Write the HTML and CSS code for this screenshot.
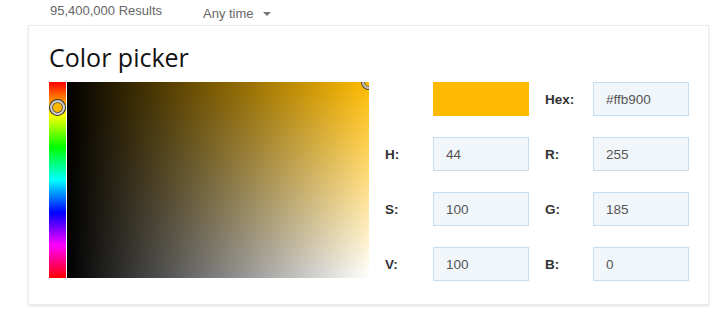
FILE: index.html
```html
<!DOCTYPE html>
<html lang="en">

<head>
    <meta charset="UTF-8">
    <title>Color picker</title>
    <link rel="stylesheet" href="styles.css">
</head>

<body>

    <header class="resultbar">
        <span class="count">95,400,000 Results</span>
        <span class="tidsfilter">Any time <span class="caret"></span></span>
    </header>

    <main>
        <section class="kort">
            <h2 class="overskrift">Color picker</h2>

            <div class="picker">
                <div class="vaelger">
                    <div class="hue">
                        <span class="hue-knap"></span>
                    </div>
                    <div class="felt">
                        <span class="felt-knap"></span>
                    </div>
                </div>

                <div class="vaerdier">
                    <span></span>
                    <div class="swatch"></div>
                    <label>Hex:</label>
                    <input type="text" value="#ffb900">

                    <label>H:</label>
                    <input type="text" value="44">
                    <label>R:</label>
                    <input type="text" value="255">

                    <label>S:</label>
                    <input type="text" value="100">
                    <label>G:</label>
                    <input type="text" value="185">

                    <label>V:</label>
                    <input type="text" value="100">
                    <label>B:</label>
                    <input type="text" value="0">
                </div>
            </div>
        </section>

        <article class="resultat">
            <a href="#">www.html color picker online tool</a>
        </article>
    </main>

</body>

</html>
```

FILE: styles.css
```css
body {
    margin: 0;
    background-color: white;
    font-family: "Liberation Sans", Arial, sans-serif;
    overflow: hidden;
}

.resultbar {
    display: flex;
    padding: 3px 0 0 50px;
    height: 22px;
    font-size: 13px;
    line-height: 16px;
    color: #666;
}

.count {
    width: 153px;
}

.tidsfilter {
    display: flex;
    align-items: center;
}

.caret {
    margin-left: 9px;
    border-left: 4px solid transparent;
    border-right: 4px solid transparent;
    border-top: 4px solid #777;
}

.kort {
    box-sizing: border-box;
    width: 681px;
    margin-left: 28px;
    padding: 14px 20px 23px 20px;
    border: 1px solid #ebebeb;
    box-shadow: 0 1px 2px rgba(0, 0, 0, .12);
}

.overskrift {
    margin: 0 0 8px 0;
    font-family: "Open Sans", sans-serif;
    font-weight: normal;
    font-size: 25px;
    line-height: 34px;
    color: #111;
}

.picker {
    display: flex;
    gap: 16px;
}

.vaelger {
    display: flex;
    gap: 1px;
    height: 196px;
}

.hue {
    position: relative;
    width: 17px;
    background: linear-gradient(to bottom, #f00, #ff0 16.7%, #0f0 33.3%, #0ff 50%, #00f 66.7%, #f0f 83.3%, #f00);
}

.hue-knap {
    position: absolute;
    left: 1px;
    top: 18px;
    width: 11px;
    height: 11px;
    border-radius: 50%;
    border: 2px solid #ccc;
    box-shadow: 0 0 0 1px #333, inset 0 0 0 1px #555;
    background-color: #ffb900;
}

.felt {
    position: relative;
    overflow: hidden;
    width: 302px;
    background: linear-gradient(to right, #000, rgba(0, 0, 0, 0)),
        linear-gradient(to bottom, #ffbb00, #fff);
}

.felt-knap {
    position: absolute;
    right: -7px;
    top: -7px;
    width: 10px;
    height: 10px;
    border-radius: 50%;
    border: 2px solid #bbb;
    box-shadow: 0 0 0 1px #333, inset 0 0 0 1px #555;
}

.vaerdier {
    display: grid;
    grid-template-columns: 32px 96px 32px 96px;
    grid-auto-rows: 34px;
    column-gap: 16px;
    row-gap: 21px;
    align-items: center;
    font-size: 13.5px;
}

.vaerdier label {
    font-weight: bold;
    color: #333;
}

.swatch {
    height: 34px;
    background-color: #ffb900;
}

.vaerdier input {
    box-sizing: border-box;
    width: 96px;
    height: 34px;
    margin: 0;
    padding: 0 0 0 12px;
    border: 1px solid #c4ddf1;
    background-color: #f1f6fa;
    font-family: "Liberation Sans", Arial, sans-serif;
    font-size: 13.5px;
    color: #555;
}

.resultat {
    padding: 28px 0 0 49px;
}

.resultat a {
    font-size: 18px;
    color: #1a0dab;
    text-decoration: none;
}
```
